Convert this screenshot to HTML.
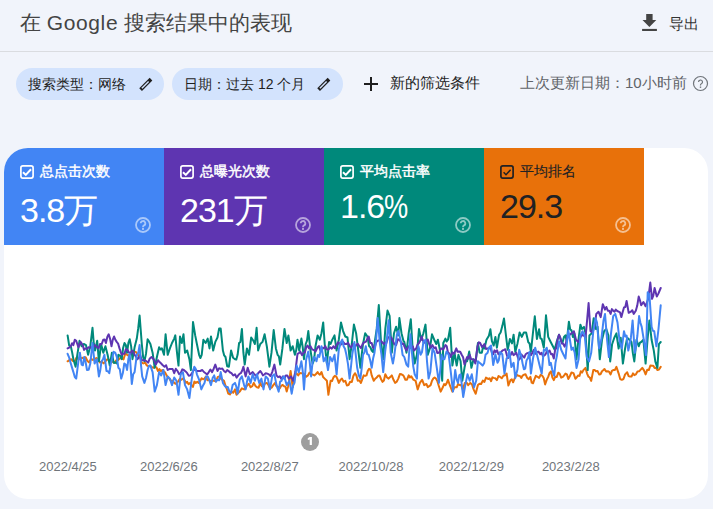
<!DOCTYPE html>
<html><head><meta charset="utf-8">
<style>
*{margin:0;padding:0;box-sizing:border-box}
html,body{width:713px;height:509px;overflow:hidden;background:#f1f4fb;font-family:"Liberation Sans",sans-serif;position:relative}
.abs{position:absolute}
#title{left:20px;top:8px;font-size:21px;color:#444;white-space:nowrap;line-height:30px}
#divider{left:0;top:51px;width:713px;height:1px;background:#dadce0}
#export{left:640px;top:8px}
#exporttxt{left:669px;top:14px;font-size:15px;color:#333;line-height:20px}
.chip{top:68px;height:32px;border-radius:16px;background:#d3e3fd;font-size:14px;color:#1f1f1f;line-height:32px;white-space:nowrap}
#chip1{left:16px;width:148px;padding-left:12px}
#chip2{left:172px;width:171px;padding-left:12px}
.pen{position:absolute;top:8px}
#plus{left:361.7px;top:75px}
#newf{left:390px;top:73px;font-size:15px;color:#1f1f1f;line-height:20px}
#upd{left:520px;top:73px;font-size:15px;color:#5f6368;line-height:20px;white-space:nowrap}
#card{left:4px;top:148px;width:704px;height:351px;background:#fff;border-radius:24px;overflow:hidden}
.tile{position:absolute;top:0;width:160px;height:97px;color:#fff}
.tile .cb{position:absolute;left:16px;top:17px}
.tile .lab{position:absolute;left:36px;top:14px;font-size:14px;font-weight:normal;-webkit-text-stroke:0.45px currentColor;line-height:18px;white-space:nowrap}
.tile .val{position:absolute;left:16px;top:42px;font-size:34px;line-height:40px;white-space:nowrap;letter-spacing:-1px}
.tile .q{position:absolute;left:131px;top:69px}
#t1{left:0;background:#4285f4}
#t2{left:160px;background:#5e35b1}
#t3{left:320px;background:#00897b}
#t4{left:480px;background:#e8710a;color:#202124}
.xl{position:absolute;top:459px;width:100px;text-align:center;font-size:13px;color:#70757a;line-height:16px;white-space:nowrap}
</style></head><body>
<div id="title" class="abs">在 <span style="letter-spacing:0.6px">Google</span> 搜索结果中的表现</div>
<div id="divider" class="abs"></div>
<svg id="export" class="abs" width="20" height="26" viewBox="0 0 20 26"><path d="M6.2 5.9h6.4v6.2h3.7l-6.9 6.9-6.9-6.9h3.7z" fill="#444"/><rect x="2.1" y="20.9" width="14.8" height="2.1" fill="#444"/></svg>
<div id="exporttxt" class="abs">导出</div>

<div id="chip1" class="abs chip">搜索类型：网络
<svg class="pen" style="left:122px" width="16" height="16" viewBox="0 0 16 16"><path d="M2.6 13.6L13 3.2" stroke="#1f1f1f" stroke-width="3.8" stroke-linecap="butt"/><path d="M3.9 12.3L10.6 5.6" stroke="#d3e3fd" stroke-width="1.4"/></svg></div>
<div id="chip2" class="abs chip">日期：过去 12 个月
<svg class="pen" style="left:144px" width="16" height="16" viewBox="0 0 16 16"><path d="M2.6 13.6L13 3.2" stroke="#1f1f1f" stroke-width="3.8" stroke-linecap="butt"/><path d="M3.9 12.3L10.6 5.6" stroke="#d3e3fd" stroke-width="1.4"/></svg></div>
<svg id="plus" class="abs" width="18" height="18" viewBox="0 0 18 18"><path d="M9 2v14M2 9h14" stroke="#1f1f1f" stroke-width="2"/></svg>
<div id="newf" class="abs">新的筛选条件</div>
<div id="upd" class="abs">上次更新日期：10小时前 <svg width="17" height="17" viewBox="0 0 17 17" style="vertical-align:-3.5px;margin-left:1px"><g fill="none" stroke="#70757a" stroke-width="1.2"><circle cx="8.5" cy="8.5" r="7"/><path d="M6.5 7a2 2 0 1 1 2.9 1.8c-.6.3-.9.7-.9 1.3v.5"/></g><rect x="7.8" y="11.5" width="1.4" height="1.4" fill="#70757a"/></svg></div>

<div id="card" class="abs">
  <div id="t1" class="tile">
    <svg class="cb" width="14" height="14" viewBox="0 0 14 14"><rect x="0.9" y="0.9" width="12.2" height="12.2" rx="2" fill="none" stroke="#fff" stroke-width="1.7"/><path d="M3 7.2l2.8 2.7 5.2-5.6" fill="none" stroke="#fff" stroke-width="2"/></svg>
    <div class="lab">总点击次数</div>
    <div class="val">3.8万</div>
    <svg class="q" width="16" height="16" viewBox="0 0 16 16"><g fill="none" stroke="rgba(255,255,255,.55)" stroke-width="1.8"><circle cx="8" cy="8" r="7"/><path d="M5.7 6.3a2.3 2.3 0 1 1 3.3 2.1c-.7.35-1 .75-1 1.5v.4"/></g><rect x="7.05" y="11" width="1.9" height="1.9" fill="rgba(255,255,255,.55)"/></svg>
  </div>
  <div id="t2" class="tile">
    <svg class="cb" width="14" height="14" viewBox="0 0 14 14"><rect x="0.9" y="0.9" width="12.2" height="12.2" rx="2" fill="none" stroke="#fff" stroke-width="1.7"/><path d="M3 7.2l2.8 2.7 5.2-5.6" fill="none" stroke="#fff" stroke-width="2"/></svg>
    <div class="lab">总曝光次数</div>
    <div class="val">231万</div>
    <svg class="q" width="16" height="16" viewBox="0 0 16 16"><g fill="none" stroke="rgba(255,255,255,.55)" stroke-width="1.8"><circle cx="8" cy="8" r="7"/><path d="M5.7 6.3a2.3 2.3 0 1 1 3.3 2.1c-.7.35-1 .75-1 1.5v.4"/></g><rect x="7.05" y="11" width="1.9" height="1.9" fill="rgba(255,255,255,.55)"/></svg>
  </div>
  <div id="t3" class="tile">
    <svg class="cb" width="14" height="14" viewBox="0 0 14 14"><rect x="0.9" y="0.9" width="12.2" height="12.2" rx="2" fill="none" stroke="#fff" stroke-width="1.7"/><path d="M3 7.2l2.8 2.7 5.2-5.6" fill="none" stroke="#fff" stroke-width="2"/></svg>
    <div class="lab">平均点击率</div>
    <div class="val" style="top:38px">1.6<span style="display:inline-block;transform:scaleX(0.8);transform-origin:0 0">%</span></div>
    <svg class="q" width="16" height="16" viewBox="0 0 16 16"><g fill="none" stroke="rgba(255,255,255,.55)" stroke-width="1.8"><circle cx="8" cy="8" r="7"/><path d="M5.7 6.3a2.3 2.3 0 1 1 3.3 2.1c-.7.35-1 .75-1 1.5v.4"/></g><rect x="7.05" y="11" width="1.9" height="1.9" fill="rgba(255,255,255,.55)"/></svg>
  </div>
  <div id="t4" class="tile">
    <svg class="cb" width="14" height="14" viewBox="0 0 14 14"><rect x="0.9" y="0.9" width="12.2" height="12.2" rx="2" fill="none" stroke="#202124" stroke-width="1.7"/><path d="M3.6 7.3l2.4 2.4 4.6-4.9" fill="none" stroke="#202124" stroke-width="1.5"/></svg>
    <div class="lab" style="-webkit-text-stroke:0.15px currentColor">平均排名</div>
    <div class="val" style="top:38px">29.3</div>
    <svg class="q" width="16" height="16" viewBox="0 0 16 16"><g fill="none" stroke="rgba(255,255,255,.55)" stroke-width="1.8"><circle cx="8" cy="8" r="7"/><path d="M5.7 6.3a2.3 2.3 0 1 1 3.3 2.1c-.7.35-1 .75-1 1.5v.4"/></g><rect x="7.05" y="11" width="1.9" height="1.9" fill="rgba(255,255,255,.55)"/></svg>
  </div>
</div>
<!--CHART--><svg class="abs" style="left:0;top:0" width="713" height="509" viewBox="0 0 713 509">
<polyline points="67.6,361.3 69.4,360.2 71.2,359.2 73.0,360.9 74.8,361.1 76.6,357.5 78.4,359.2 80.2,359.0 82.0,357.8 83.8,358.1 85.6,357.2 87.4,361.0 89.2,362.4 91.0,358.9 92.8,359.9 94.6,359.2 96.4,358.0 98.2,359.2 100.0,362.4 101.8,361.6 103.6,363.4 105.4,361.3 107.2,359.3 109.0,359.8 110.8,361.3 112.6,361.6 114.5,362.9 116.3,360.2 118.1,359.9 119.9,358.3 121.7,358.1 123.5,359.5 125.3,353.5 127.1,354.8 128.9,356.0 130.7,352.3 132.5,352.7 134.3,351.5 136.1,352.1 137.9,354.8 139.7,356.7 141.5,362.3 143.3,363.5 145.0,362.5 146.8,365.4 148.5,366.4 150.2,365.7 152.0,367.3 153.7,367.8 155.1,366.6 156.6,367.6 158.0,371.0 159.4,369.1 160.9,371.3 162.3,370.0 163.7,371.4 165.2,372.6 166.6,375.4 168.1,377.7 169.5,378.8 171.0,380.8 172.6,380.8 174.2,382.9 175.6,383.8 177.1,382.6 178.5,380.8 180.0,378.7 181.4,379.7 182.9,378.6 184.3,379.8 185.8,382.8 187.2,381.9 188.6,384.2 190.1,382.9 191.5,385.1 192.9,386.9 194.4,381.6 195.8,382.9 197.3,381.8 198.7,382.9 200.2,380.8 201.6,378.2 203.1,379.3 204.5,378.6 205.9,376.5 207.4,380.2 208.8,379.7 210.6,381.5 212.4,380.8 214.2,380.8 216.0,381.3 217.8,376.9 219.6,376.4 221.1,378.9 222.5,379.8 224.0,380.8 225.4,385.5 226.9,389.2 228.3,393.7 229.9,394.4 231.5,391.6 233.2,392.8 235.0,389.4 236.5,394.8 238.1,393.1 239.7,391.6 241.9,388.3 244.1,389.4 245.7,388.1 247.3,385.1 248.9,383.9 250.6,387.3 252.2,386.2 253.8,382.9 255.4,385.9 257.0,387.3 258.6,387.7 260.3,382.9 261.9,386.2 263.5,386.2 265.1,383.4 266.8,382.9 268.4,385.0 270.0,388.3 271.6,387.6 273.3,385.1 274.9,383.1 276.5,386.2 278.1,387.0 279.8,388.3 281.2,385.8 282.7,384.9 284.1,386.2 285.4,386.6 286.7,391.6 288.1,386.5 289.5,378.6 290.6,371.0 292.7,387.3 294.9,375.4 296.5,373.4 298.2,375.4 299.8,373.0 301.4,373.2 303.0,373.2 304.6,374.3 306.2,376.8 307.9,375.4 309.5,372.6 311.1,374.3 312.8,374.6 314.4,375.4 316.0,374.0 317.6,372.1 318.2,373.2 319.9,374.7 321.5,372.1 323.1,377.0 324.7,378.6 326.9,380.8 328.4,394.8 330.6,380.8 332.0,381.1 333.4,377.5 334.8,375.8 336.2,376.4 337.5,379.2 338.8,382.9 340.4,380.0 342.0,378.6 343.6,381.7 345.3,380.8 346.9,385.4 348.5,385.1 350.1,381.7 351.8,381.9 353.4,375.8 355.0,373.2 356.4,375.6 357.8,380.8 359.4,380.4 360.9,382.9 362.3,379.1 363.7,375.4 365.1,375.9 366.5,375.4 367.8,370.9 369.1,368.9 370.4,369.5 371.7,375.4 373.8,380.8 375.2,378.7 376.7,377.5 378.1,375.8 379.5,375.4 381.0,379.0 382.5,381.9 383.9,380.5 385.3,374.3 387.0,377.5 388.6,378.6 390.2,377.1 391.8,375.4 393.5,379.8 395.1,382.9 396.7,381.7 398.3,378.6 399.9,374.1 401.5,374.3 403.2,375.4 403.6,375.9 405.4,379.7 407.0,379.7 408.7,375.4 410.0,377.4 411.3,376.4 413.4,379.7 415.6,380.8 417.7,389.4 419.9,382.9 422.1,379.7 424.2,385.1 426.4,384.0 427.8,387.1 429.2,386.2 430.6,385.1 432.0,380.8 433.3,378.6 434.6,377.5 435.9,378.6 437.2,380.8 438.9,386.2 440.7,391.6 442.8,387.3 444.1,384.1 445.4,385.1 446.7,383.1 448.0,379.7 450.2,386.2 452.4,391.6 454.5,387.3 456.7,387.3 458.1,383.9 459.5,385.1 461.1,385.0 462.7,389.4 464.9,382.9 466.5,382.5 468.2,385.1 470.3,382.9 472.0,384.4 473.6,389.4 475.7,393.7 477.9,385.1 479.5,383.7 481.1,384.0 482.8,380.6 484.4,381.9 486.0,377.6 487.6,378.6 488.2,379.0 489.6,378.3 491.1,381.2 492.4,377.4 493.7,377.9 495.3,378.3 496.9,380.1 498.5,376.0 500.1,376.9 501.8,378.3 503.4,375.8 505.0,375.3 506.6,373.6 508.4,385.5 510.5,380.1 511.8,379.3 513.1,382.3 515.3,376.9 516.9,375.0 518.5,375.8 519.9,376.0 521.3,377.9 522.6,375.6 523.9,374.7 525.5,374.3 527.2,377.9 528.8,379.2 530.4,376.9 531.7,382.7 533.0,383.3 534.4,379.4 535.8,375.8 537.5,376.8 539.1,377.9 540.7,374.7 542.3,375.8 543.7,378.0 545.1,384.4 546.7,379.8 548.2,376.9 549.6,372.9 551.0,371.4 552.4,377.5 553.8,380.1 555.3,376.7 556.8,376.9 558.2,372.7 559.6,373.6 561.2,377.6 562.9,376.9 564.2,375.4 565.5,373.6 566.9,374.4 568.3,379.0 569.9,376.0 571.5,372.5 573.5,373.1 575.4,378.7 576.8,377.2 578.2,375.5 579.5,375.9 580.8,371.2 582.1,372.6 583.4,370.1 585.5,367.9 587.0,373.3 588.4,376.6 589.8,377.5 591.2,380.9 593.3,370.1 594.6,369.9 595.9,371.2 597.5,371.0 599.1,374.4 600.5,374.2 602.0,371.2 603.2,370.3 604.5,369.0 606.1,371.6 607.8,371.2 609.2,371.9 610.6,374.4 611.9,370.8 613.2,370.1 614.8,370.1 616.4,366.9 618.6,373.3 620.2,379.1 621.8,379.8 623.5,379.0 625.1,374.4 627.2,372.3 628.6,376.1 630.0,376.6 631.5,376.6 633.0,373.3 634.4,375.1 635.8,374.4 637.5,371.4 639.1,371.2 640.7,369.6 642.3,367.9 644.0,370.4 645.6,374.4 647.2,369.8 648.8,370.1 650.4,365.5 652.0,365.8 653.3,365.7 654.6,367.9 656.0,367.7 657.4,370.1 659.0,369.5 660.7,366.9" fill="none" stroke="#e8710a" stroke-width="2" stroke-linejoin="round" stroke-linecap="round"/>
<polyline points="67.6,335.4 69.2,345.6 70.8,346.2 72.1,352.1 73.4,359.2 75.6,366.7 77.3,354.8 79.5,340.8 81.6,346.2 83.8,344.0 86.0,345.1 88.1,354.8 90.3,346.2 92.5,327.8 93.8,343.8 95.0,350.5 97.2,340.8 98.9,361.3 101.1,344.0 103.3,352.7 105.4,346.2 107.6,354.8 109.8,365.6 111.9,352.7 113.6,362.7 115.2,362.4 116.8,363.4 118.4,354.8 120.1,355.6 121.7,359.2 123.1,348.1 124.5,343.0 125.8,345.0 127.1,352.7 128.4,342.8 129.7,339.3 131.1,346.1 132.5,359.2 134.6,347.3 136.8,338.6 138.2,328.4 139.6,315.5 141.8,344.0 143.1,356.9 144.4,361.3 146.0,353.9 147.6,339.3 149.0,341.4 150.4,344.0 152.6,352.7 154.7,367.8 156.9,357.0 159.1,347.3 160.5,349.5 161.9,348.4 164.0,354.8 165.6,334.3 167.7,354.8 169.9,348.4 172.0,343.0 174.2,338.6 175.3,335.4 177.0,352.7 178.5,365.6 180.0,336.5 181.8,343.0 183.5,334.3 185.0,352.7 187.2,350.5 189.4,359.2 190.9,370.0 193.0,322.0 195.2,335.4 196.9,344.0 199.1,354.8 200.4,358.0 201.7,354.8 203.4,339.7 205.6,343.0 207.7,338.6 209.5,348.4 211.0,336.5 213.2,350.5 215.3,341.9 217.5,337.5 219.1,328.6 220.7,328.5 222.9,350.5 224.2,355.4 225.5,357.0 227.2,366.2 228.9,366.7 231.1,350.5 233.1,357.8 235.0,359.2 236.3,359.6 237.6,354.8 239.1,343.0 240.4,341.9 241.9,328.9 243.4,352.7 244.7,364.6 246.9,348.4 249.0,354.8 251.2,337.5 253.4,340.8 254.9,344.0 256.6,327.8 258.1,350.5 260.3,344.0 262.5,341.9 264.6,334.3 266.8,346.2 268.1,356.2 269.4,366.7 271.5,352.7 273.7,330.0 275.9,348.4 277.6,354.8 278.9,356.3 280.2,364.6 282.4,348.4 284.5,328.9 286.7,343.0 288.4,335.4 290.6,350.5 292.7,346.2 294.9,354.8 296.2,350.3 297.5,339.7 299.2,350.5 301.4,338.6 302.7,347.1 304.0,359.2 305.7,344.0 307.0,340.7 308.3,331.1 310.5,350.5 312.6,363.5 314.1,359.8 315.5,346.2 317.6,335.4 319.8,339.7 321.5,333.2 323.2,322.4 324.7,344.0 326.9,363.5 329.1,341.9 330.6,344.0 332.3,339.7 334.5,335.4 336.6,350.5 338.8,339.7 341.0,322.4 343.1,331.1 345.3,336.5 347.5,337.5 349.6,359.2 351.8,344.0 353.9,324.6 356.1,333.2 358.3,350.5 360.4,367.8 361.7,354.8 363.0,344.0 365.2,333.2 367.4,336.5 369.1,346.2 370.4,347.3 371.7,350.5 373.1,352.0 374.5,344.0 376.7,328.9 378.8,305.1 381.0,341.9 383.2,359.2 385.3,328.9 387.5,310.5 389.6,315.9 391.8,352.7 394.0,333.2 396.1,326.7 398.3,335.4 399.4,318.1 401.5,333.2 403.6,341.4 404.3,341.9 406.5,352.7 408.7,333.2 410.8,319.2 412.5,346.2 414.7,363.5 416.9,354.8 419.0,328.9 421.2,339.7 423.4,333.2 425.5,324.6 427.7,354.8 429.9,348.4 432.0,334.3 434.2,339.7 436.3,344.0 437.9,339.7 440.0,350.5 442.2,380.8 443.3,343.0 445.4,338.6 446.7,341.5 448.0,339.7 450.2,327.8 452.4,365.6 454.5,352.7 456.7,365.6 458.4,354.8 460.6,361.3 462.3,380.8 464.5,367.8 465.8,361.1 467.1,361.3 469.2,351.6 471.4,367.8 473.6,359.2 475.7,361.3 477.9,343.0 479.6,352.7 481.8,352.7 483.1,346.6 484.4,348.4 486.5,339.7 488.9,335.8 490.4,329.3 491.9,341.2 493.7,345.5 495.4,336.9 496.9,347.7 499.1,334.7 500.6,332.5 502.3,326.1 504.0,318.5 505.6,332.5 507.7,349.8 509.9,339.0 512.0,343.4 513.6,334.7 515.3,352.0 517.5,343.4 519.6,332.5 521.8,336.9 523.9,332.5 526.1,332.5 528.3,342.3 529.6,343.5 530.9,352.0 533.0,332.5 534.8,316.3 536.9,339.0 539.1,329.3 540.4,338.4 541.7,339.0 543.8,347.7 546.0,315.3 548.2,336.9 550.3,341.2 552.5,345.5 554.7,349.8 556.8,341.2 559.0,334.7 561.2,341.2 562.6,342.3 564.0,336.9 565.4,335.3 566.8,341.2 568.9,321.7 570.2,329.5 571.5,330.4 572.9,337.0 574.3,333.4 576.5,359.3 578.2,342.0 580.4,324.7 581.9,329.0 584.0,326.9 585.5,333.4 587.7,370.1 589.4,335.5 591.6,333.4 593.7,318.2 595.9,329.0 597.6,326.9 599.8,359.3 602.0,339.8 604.1,331.2 606.3,329.0 608.4,335.5 610.2,361.4 612.1,344.2 614.3,337.7 616.4,333.4 618.6,348.5 620.7,337.7 622.9,363.6 625.1,348.5 627.2,337.7 629.4,339.8 631.5,342.0 632.9,353.4 634.3,361.4 636.5,339.8 638.7,346.3 640.0,342.6 641.2,342.0 643.4,339.8 645.6,363.6 647.7,337.7 649.4,320.4 651.6,339.8 653.8,350.6 655.3,361.4 657.4,367.9 658.9,344.2 660.7,342.0" fill="none" stroke="#00897b" stroke-width="2" stroke-linejoin="round" stroke-linecap="round"/>
<polyline points="67.6,348.4 69.2,347.6 70.8,346.2 72.1,343.2 73.4,345.1 74.8,339.7 76.2,340.8 78.4,347.3 80.6,341.9 82.7,345.1 84.1,349.9 85.5,348.4 87.0,348.8 88.6,347.3 90.0,347.5 91.4,347.3 93.0,349.1 94.6,345.1 95.9,345.8 97.2,347.3 98.6,348.1 100.0,344.0 101.7,344.0 103.3,339.7 104.6,339.4 105.9,343.0 107.3,337.0 108.7,334.3 110.1,338.9 111.5,346.2 112.8,339.6 114.1,336.5 115.4,339.8 116.7,341.9 118.1,343.6 119.5,348.4 121.7,354.8 123.1,353.8 124.5,353.8 125.8,349.2 127.1,349.4 129.2,352.7 130.5,354.3 131.8,350.5 133.2,351.7 134.6,354.8 136.1,356.7 137.5,359.2 138.8,357.6 140.1,354.8 141.7,360.2 143.3,360.2 144.9,360.2 146.5,361.3 148.2,362.6 149.8,358.4 151.5,357.0 153.7,359.2 155.8,364.6 158.0,360.2 159.6,362.1 161.2,363.5 162.8,365.3 164.5,366.7 166.1,365.2 167.7,370.0 169.3,369.1 171.0,368.9 172.6,369.0 174.2,373.2 175.8,368.8 177.5,371.0 179.1,374.1 180.7,373.2 182.3,369.4 183.9,370.0 185.6,371.4 187.2,373.2 188.8,375.8 190.4,375.4 192.1,373.1 193.7,370.0 195.3,369.4 196.9,371.0 198.6,371.1 200.2,371.0 202.3,370.0 203.9,372.0 205.6,373.2 207.2,374.5 208.8,372.1 210.4,369.5 212.1,372.1 213.7,368.7 215.3,364.6 217.5,371.0 219.1,368.3 220.7,368.9 222.3,368.5 224.0,371.0 225.6,372.3 227.2,370.0 228.6,371.1 230.1,372.5 231.5,373.2 233.2,375.5 235.0,374.3 236.6,377.6 238.2,375.4 239.5,373.9 240.8,373.2 242.1,370.7 243.4,366.7 245.6,376.4 247.7,367.8 249.9,374.3 251.3,373.2 252.7,372.1 254.1,373.8 255.5,375.4 256.8,375.6 258.1,373.2 260.3,371.0 261.6,372.9 262.9,375.4 264.3,374.5 265.7,373.2 267.3,373.6 268.9,374.3 270.5,376.1 272.2,372.1 274.4,364.6 276.5,375.4 278.1,377.2 279.8,376.4 281.4,378.9 283.0,376.4 284.4,378.8 285.8,375.4 287.3,375.4 288.8,378.6 291.0,376.4 293.2,380.8 295.3,372.1 297.5,353.8 298.9,353.1 300.3,351.6 302.0,355.1 303.6,352.7 304.9,352.2 306.2,347.3 307.6,345.5 309.0,348.4 310.6,346.4 312.2,349.4 313.9,350.1 315.5,351.6 317.6,347.3 319.0,346.1 320.4,350.5 322.0,347.7 323.7,348.4 325.3,346.1 326.9,349.4 328.5,349.5 330.1,347.3 331.8,348.6 333.4,346.2 335.0,348.3 336.6,345.1 338.2,342.3 339.9,344.0 341.5,344.4 343.1,341.9 344.8,344.0 346.4,344.0 348.0,342.7 349.6,346.2 351.2,347.6 352.9,344.0 354.5,347.6 356.1,345.1 357.8,343.8 359.4,346.2 361.0,348.1 362.6,344.0 364.2,342.3 365.8,341.9 367.2,339.1 368.7,336.5 370.2,343.0 371.7,343.0 373.1,347.9 374.5,348.4 376.1,342.4 377.7,340.8 379.4,340.3 381.0,340.8 382.4,342.5 383.8,344.0 385.1,342.4 386.4,343.0 388.0,337.7 389.6,336.5 391.2,337.5 392.9,340.8 394.5,344.4 396.1,345.1 397.8,339.2 399.4,339.7 401.0,342.2 402.6,344.0 403.6,344.0 404.3,346.2 406.5,350.5 408.7,346.2 410.0,346.9 411.3,348.4 412.7,346.3 414.1,350.5 416.2,348.4 417.6,344.6 419.0,343.0 420.3,340.6 421.6,336.5 423.8,343.0 425.1,342.0 426.4,340.8 427.8,339.5 429.2,344.0 430.9,347.8 432.5,345.1 434.1,348.1 435.7,347.3 437.3,353.1 438.9,352.7 441.1,348.4 443.3,349.4 445.4,345.1 446.7,346.3 448.0,352.7 449.4,353.3 450.8,357.0 452.5,352.4 454.1,353.8 456.3,348.4 457.6,351.8 458.8,351.6 460.2,351.7 461.7,354.8 463.1,357.3 464.5,364.6 465.8,360.3 467.1,357.0 468.4,358.6 469.7,354.8 471.1,359.1 472.5,359.2 473.9,359.8 475.3,363.5 477.5,346.2 478.8,342.3 480.1,343.0 482.2,347.3 484.4,344.0 486.0,349.0 487.6,348.4 489.0,348.5 490.4,347.7 491.8,352.3 493.2,354.2 494.5,350.4 495.8,352.0 497.1,350.2 498.4,354.2 499.8,354.3 501.2,352.0 502.6,350.4 504.0,349.8 505.3,349.2 506.6,354.2 507.9,358.1 509.2,356.3 510.6,355.0 512.0,352.0 513.5,355.1 514.9,354.2 516.2,352.5 517.5,356.3 518.8,359.8 520.0,358.5 521.5,354.5 522.9,356.3 524.3,357.6 525.7,354.2 527.0,353.3 528.3,353.1 529.6,353.1 530.9,355.2 532.3,352.9 533.7,349.8 535.3,353.7 536.9,352.0 538.5,351.6 540.2,354.2 541.6,352.8 543.0,356.3 544.3,355.4 545.6,354.2 546.9,351.4 548.2,352.0 549.6,350.5 551.0,354.2 552.4,354.1 553.8,358.5 555.1,350.1 556.4,347.7 557.7,339.2 559.0,334.7 560.4,337.8 561.8,343.4 563.2,343.7 564.6,346.6 565.9,343.5 567.2,336.9 568.5,334.4 569.8,334.7 571.2,333.6 572.6,332.5 573.9,331.2 576.0,339.8 578.2,342.0 580.4,337.7 581.7,334.5 583.0,335.5 584.2,335.6 585.5,337.7 587.3,318.2 588.6,303.1 590.5,331.2 592.7,332.3 594.8,324.7 596.3,313.9 598.5,311.7 600.7,317.1 602.8,304.2 605.0,309.6 606.4,307.0 607.8,310.7 609.2,310.7 610.6,313.9 611.9,309.1 613.2,310.7 614.5,311.7 615.8,309.6 617.2,311.0 618.6,311.7 620.0,312.4 621.4,317.1 622.7,312.1 624.0,307.4 625.3,307.0 626.6,300.9 628.7,312.8 630.9,311.7 632.3,310.2 633.7,313.9 635.8,310.7 637.2,305.8 638.7,296.6 640.0,300.5 641.2,305.3 643.4,302.0 645.6,306.3 646.9,302.5 648.2,298.8 650.3,282.6 652.0,298.8 653.3,295.6 654.6,288.0 656.8,296.6 658.5,293.4 660.7,288.0" fill="none" stroke="#5e35b1" stroke-width="2" stroke-linejoin="round" stroke-linecap="round"/>
<polyline points="67.6,353.8 69.2,357.7 70.8,363.5 72.1,367.9 73.4,372.1 74.8,377.1 76.2,378.6 78.4,361.3 79.9,352.7 81.6,364.6 82.9,365.3 84.2,357.0 85.6,362.0 87.0,370.0 88.7,369.8 90.3,363.5 92.5,343.0 94.6,363.5 96.8,359.2 98.9,376.4 100.2,370.8 101.5,361.3 103.0,359.3 104.4,354.8 106.5,371.0 107.9,371.2 109.3,373.2 110.6,364.8 111.9,359.2 113.6,351.8 115.2,352.7 116.8,356.8 118.4,367.8 119.8,369.2 121.2,378.6 122.8,373.3 124.3,363.5 125.7,364.5 127.1,370.0 128.4,358.8 129.7,353.8 131.8,384.0 133.2,374.2 134.6,372.1 136.8,354.8 138.2,353.1 139.6,345.1 140.9,364.2 142.2,376.4 144.4,382.9 146.0,378.0 147.6,370.0 149.0,365.8 150.4,365.6 152.6,372.1 154.7,391.6 156.9,385.1 159.1,372.1 161.2,375.4 163.4,370.0 165.6,385.1 167.7,376.4 169.9,378.6 172.0,385.1 174.2,377.5 176.4,380.8 178.5,394.8 180.7,374.3 182.9,372.1 185.0,385.1 187.2,389.4 189.4,398.1 191.5,380.8 192.9,371.4 194.3,366.7 195.6,368.6 196.9,374.3 199.1,379.7 201.3,389.4 202.9,385.8 204.5,382.9 206.1,376.5 207.7,376.4 209.3,380.2 211.0,385.1 212.6,378.1 214.2,375.4 215.8,381.8 217.5,379.7 219.1,380.3 220.7,372.1 222.9,382.9 224.5,385.5 226.1,387.3 227.8,387.1 229.4,391.6 231.0,392.7 232.6,385.1 235.0,382.9 236.3,386.5 237.6,393.7 239.7,379.7 241.9,376.4 244.1,385.1 245.6,389.4 247.0,381.6 248.4,376.4 250.6,382.9 252.7,374.3 254.9,380.8 257.0,374.3 259.2,382.9 261.4,378.6 263.5,389.4 265.7,376.4 267.9,378.6 270.0,389.4 272.2,376.4 274.4,374.3 276.5,385.1 278.7,391.6 280.1,381.6 281.5,380.8 282.8,377.5 284.1,376.4 285.4,380.5 286.7,385.1 288.1,383.0 289.5,380.8 291.7,393.7 293.1,385.5 294.5,382.9 296.6,365.6 298.8,372.1 300.1,366.7 301.4,361.3 302.7,370.8 304.0,389.4 306.2,359.2 308.3,351.6 309.7,361.8 311.1,376.4 312.5,362.9 313.9,357.0 315.2,358.2 316.5,361.3 317.9,354.9 319.3,357.0 321.5,346.2 323.7,361.3 325.8,357.0 328.0,370.0 330.1,357.0 332.3,361.3 334.5,354.8 336.6,374.3 338.8,349.4 341.0,341.9 342.3,339.6 343.6,346.2 345.0,348.7 346.4,354.8 348.0,364.2 349.6,378.6 350.9,367.5 352.2,354.8 354.4,341.9 355.8,355.1 357.2,367.8 358.8,375.5 360.4,378.6 361.7,368.2 363.0,354.8 364.4,352.5 365.8,346.2 367.2,354.0 368.7,354.8 370.2,360.3 371.7,367.8 373.1,358.6 374.5,352.7 376.1,339.9 377.7,318.1 379.9,344.0 381.5,354.8 383.2,372.1 385.3,350.5 387.0,337.5 388.6,320.3 390.7,352.7 392.9,363.5 394.2,356.2 395.5,346.2 396.9,334.4 398.3,331.1 400.5,339.7 402.6,354.8 404.3,357.0 406.5,364.6 408.2,366.7 410.4,334.3 411.9,352.7 413.3,366.6 414.7,374.3 416.9,378.6 418.4,346.2 420.6,354.8 422.0,352.0 423.4,341.9 425.5,339.7 427.0,361.3 428.6,378.6 430.3,372.1 432.5,348.4 434.6,352.7 436.8,367.8 438.9,382.9 440.2,370.0 441.5,354.8 442.9,359.2 444.4,359.2 446.5,351.6 448.7,354.8 450.8,372.1 453.0,391.6 455.2,370.0 456.6,379.3 458.0,382.9 459.3,375.3 460.6,374.3 461.9,385.9 463.2,397.0 465.3,385.1 467.5,374.3 469.7,380.8 471.8,374.3 474.0,387.3 476.2,380.8 477.9,361.3 479.2,362.4 480.5,363.5 482.6,365.6 484.1,363.3 485.5,354.8 487.6,352.7 488.9,347.7 491.1,345.5 493.2,365.0 495.4,354.2 497.5,362.8 498.8,360.2 500.1,352.0 502.3,354.2 504.5,373.6 506.6,358.5 507.9,357.2 509.2,349.8 511.4,367.1 513.6,362.8 515.3,377.9 517.5,369.3 519.2,349.8 521.3,356.3 522.6,363.6 523.9,369.3 525.2,368.6 526.5,360.6 528.0,358.0 529.4,352.0 530.9,373.6 533.0,358.5 535.2,347.7 537.4,356.3 539.5,365.0 541.7,373.6 543.8,349.8 545.2,350.5 546.7,347.7 548.1,353.9 549.5,365.0 550.8,362.8 552.1,369.3 554.2,375.8 555.5,362.7 556.8,356.3 559.0,341.2 561.2,349.8 563.3,354.2 565.5,358.5 566.9,343.2 568.3,330.4 569.8,339.0 571.5,349.8 573.1,347.6 574.7,352.8 576.5,367.9 578.6,359.3 580.4,335.5 582.5,331.2 584.7,335.5 586.8,357.1 589.0,361.4 591.2,352.8 593.3,331.2 595.5,318.2 597.0,322.5 599.1,348.5 601.3,339.8 603.5,320.4 605.0,313.9 607.1,339.8 608.9,357.1 611.0,333.4 613.2,316.1 615.3,313.9 617.5,322.5 619.7,342.0 621.8,348.5 624.0,331.2 625.3,336.5 626.6,335.5 628.3,350.6 629.6,344.7 630.9,337.7 632.6,320.4 634.8,352.8 636.1,345.3 637.4,335.5 639.1,316.1 640.4,322.7 641.7,326.9 643.8,339.8 646.0,355.0 647.7,292.3 649.4,294.5 651.6,326.9 652.9,330.7 654.2,331.2 656.4,346.3 658.5,329.0 660.7,305.3" fill="none" stroke="#4285f4" stroke-width="2" stroke-linejoin="round" stroke-linecap="round"/>
</svg><!--/CHART-->
<div class="xl" style="left:17.9px">2022/4/25</div>
<div class="xl" style="left:118.9px">2022/6/26</div>
<div class="xl" style="left:219.8px">2022/8/27</div>
<div class="xl" style="left:321.0px">2022/10/28</div>
<div class="xl" style="left:421.4px">2022/12/29</div>
<div class="xl" style="left:520.8px">2023/2/28</div>
<svg class="abs" style="left:301px;top:433px" width="18" height="18" viewBox="0 0 18 18"><circle cx="9" cy="9" r="9" fill="#9e9e9e"/><path d="M8.6 4.1h2.3v8h-2.2v-5.7l-1.9 0.7v-1.8z" fill="#fff"/></svg>
</body></html>
